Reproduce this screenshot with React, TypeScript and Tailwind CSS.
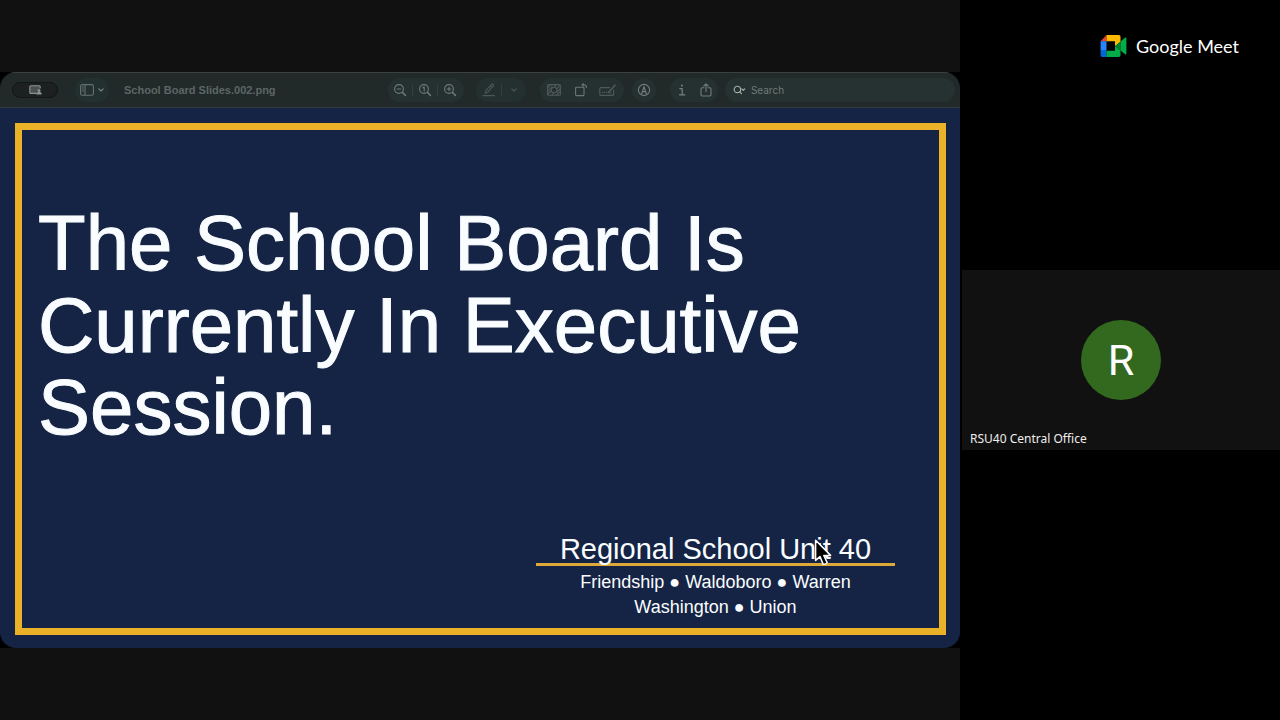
import React from "react";

function ToolButton({
  label,
  className,
  children
}: {
  label: string;
  className: string;
  children: React.ReactNode;
}) {
  return (
    <button type="button" aria-label={label} className={`flex h-full items-center justify-center ${className}`}>
      {children}
    </button>
  );
}

function Icon({
  w = 14,
  h = 14,
  className = "text-[#66716f]",
  children
}: {
  w?: number;
  h?: number;
  className?: string;
  children: React.ReactNode;
}) {
  return (
    <svg
      width={w}
      height={h}
      viewBox={`0 0 ${w} ${h}`}
      fill="none"
      stroke="currentColor"
      strokeWidth="1.1"
      strokeLinecap="round"
      strokeLinejoin="round"
      aria-hidden="true"
      className={className}
    >
      {children}
    </svg>
  );
}

function Divider() {
  return <span className="h-3 w-px bg-[#33403e]" />;
}

function Magnifier({ children }: { children: React.ReactNode }) {
  return (
    <Icon className="text-[#6f7a78]">
      <circle cx="6" cy="6" r="4.4" />
      <path d="M9.3 9.3 12.4 12.4" strokeWidth="1.5" />
      {children}
    </Icon>
  );
}

function Toolbar() {
  return (
    <div className="flex h-9 items-center border-t border-b border-t-[#3b4141] border-b-[#303b42] bg-[#212929] pr-[5px] pl-3">
      <button
        type="button"
        aria-label="Presenter options"
        className="flex h-4 w-[46px] items-center justify-center rounded-full border border-[#121616] bg-[#1c2020]"
      >
        <Icon w={13} h={10} className="text-[#8d9493]">
          <path d="M7 8.4H1.8a1 1 0 0 1-1-1V1.8a1 1 0 0 1 1-1h8.4a1 1 0 0 1 1 1V3" fill="#4b5150" />
          <circle cx="10" cy="5.4" r="1.5" fill="currentColor" stroke="none" />
          <path d="M7.2 9.4c0-1.7 1.2-2.3 2.8-2.3s2.8.6 2.8 2.3z" fill="currentColor" stroke="none" />
        </Icon>
      </button>

      <div className="ml-[17px] flex h-6 w-[34px] rounded-full bg-[#233030]">
        <ToolButton label="Sidebar" className="w-full gap-1">
          <Icon w={14} h={12}>
            <rect x="0.6" y="0.6" width="12.8" height="10.6" rx="1.8" />
            <path d="M5 .8v10.2M2.2 3h1.2M2.2 5h1.2M2.2 7h1.2" />
          </Icon>
          <Icon w={6} h={4} className="text-[#7a8482]">
            <path d="M.8.8 3 3 5.2.8" />
          </Icon>
        </ToolButton>
      </div>

      <h2 className="ml-[15px] min-w-0 flex-1 truncate font-['Liberation_Sans',Arial,sans-serif] text-[11px] font-bold text-[#5c6665]">
        School Board Slides.002.png
      </h2>

      <div className="flex h-6 items-center rounded-full bg-[#253130] pr-[2px]">
        <ToolButton label="Zoom out" className="w-6">
          <Magnifier>
            <path d="M4.2 6h3.6" />
          </Magnifier>
        </ToolButton>
        <Divider />
        <ToolButton label="Actual size" className="w-6">
          <Magnifier>
            <path d="M5 4.8 6.2 4v4" />
          </Magnifier>
        </ToolButton>
        <Divider />
        <ToolButton label="Zoom in" className="w-6">
          <Magnifier>
            <path d="M4.2 6h3.6M6 4.2v3.6" />
          </Magnifier>
        </ToolButton>
      </div>

      <div className="ml-3 flex h-6 items-center rounded-full bg-[#243030]">
        <ToolButton label="Highlight" className="w-[25px]">
          <Icon className="text-[#4c5755]">
            <path d="M3.2 10.2 4 7.4 9.6 1.4a1.1 1.1 0 0 1 1.7 1.5L5.8 9.2zM8.4 2.8l1.6 1.5" />
            <path d="M1 12.6h11.6" />
          </Icon>
        </ToolButton>
        <Divider />
        <ToolButton label="Highlight colors" className="w-6">
          <Icon w={6} h={4} className="text-[#4c5755]">
            <path d="M.8.8 3 3 5.2.8" />
          </Icon>
        </ToolButton>
      </div>

      <div className="ml-[14px] flex h-6 items-center rounded-full bg-[#253130] pr-[3px]">
        <ToolButton label="Remove background" className="w-[27px]">
          <Icon w={14} h={12} className="text-[#4f5a58]">
            <rect x="0.6" y="0.6" width="12.8" height="10.6" rx="1" />
            <circle cx="7" cy="6" r="2.8" />
            <path d="M1 3.4 3.6.8M1 6.8 5 2.8M1 10l3-3M10 4.6l3-3M10 8l3-3M9.6 11 13 7.8M5 11l1.4-1.4M7.6 2.4 9.2.8" />
          </Icon>
        </ToolButton>
        <ToolButton label="Rotate" className="w-[27px]">
          <Icon className="text-[#6b7674]">
            <rect x="1.6" y="4.2" width="8.4" height="8.4" rx="0.8" />
            <path d="M8 1.8h1.8a2.6 2.6 0 0 1 2.6 2.6M9.2.6 8 1.8 9.2 3" />
          </Icon>
        </ToolButton>
        <ToolButton label="Fill form" className="w-[27px]">
          <Icon w={17} h={13} className="text-[#4f5a58]">
            <path d="M10.5 3.6H2a1.2 1.2 0 0 0-1.2 1.2v5.4A1.2 1.2 0 0 0 2 11.4h11.4a1.2 1.2 0 0 0 1.2-1.2V6" />
            <path d="M9.6 8.2 16 1.2" strokeWidth="1.6" />
            <path d="M3.2 8.4h.4M5.2 8.4h.4M7.2 8.4h.4M9.2 8.8h2.6" />
          </Icon>
        </ToolButton>
      </div>

      <div className="ml-2 flex h-6 rounded-full bg-[#253130]">
        <ToolButton label="Markup" className="w-6">
          <Icon className="text-[#737e7c]">
            <circle cx="7" cy="7" r="5.6" />
            <path d="M4.6 11 7 3.6 9.4 11M5.6 8.6h2.8" />
          </Icon>
        </ToolButton>
      </div>

      <div className="ml-[14px] flex h-6 rounded-full bg-[#253130]">
        <ToolButton label="Info" className="w-6">
          <Icon w={8} h={12} className="text-[#76807f]">
            <circle cx="3.9" cy="1.4" r="1" fill="currentColor" stroke="none" />
            <path d="M1.8 4.6h2.4v6M1.4 10.8h5.4" strokeWidth="1.2" />
          </Icon>
        </ToolButton>
        <ToolButton label="Share" className="w-6">
          <Icon w={12} h={14} className="text-[#737e7c]">
            <path d="M4 4.8H2.2A1.2 1.2 0 0 0 1 6v5.8A1.2 1.2 0 0 0 2.2 13h7.6a1.2 1.2 0 0 0 1.2-1.2V6a1.2 1.2 0 0 0-1.2-1.2H8" />
            <path d="M6 8.6V1M3.8 3 6 .8 8.2 3" />
          </Icon>
        </ToolButton>
      </div>

      <label className="ml-[7px] flex h-6 w-[230px] items-center gap-[5px] rounded-full bg-[#263231] pl-2">
        <Icon w={14} h={10} className="text-[#a3abaa]">
          <circle cx="4.8" cy="4.4" r="3.5" strokeWidth="1.3" />
          <path d="M7.4 7 9.2 9M9.6 3.8l1.6 1.6 1.6-1.6" strokeWidth="1.3" />
        </Icon>
        <input
          type="text"
          aria-label="Search"
          placeholder="Search"
          className="w-full bg-transparent font-['Inter',sans-serif] text-[10px] outline-none placeholder:text-[#6f7977]"
        />
      </label>
    </div>
  );
}

function Pointer() {
  return (
    <svg
      width="20"
      height="30"
      viewBox="0 0 20 30"
      aria-hidden="true"
      className="absolute top-[2px] right-[62px]"
    >
      <path
        d="M2.6 3.2v20.2l4.4-3.8 3.2 7.6q2 .6 4-1.4l-3.4-7.4h6.8z"
        fill="#000"
        stroke="#fff"
        strokeWidth="1.5"
        strokeLinejoin="round"
      />
    </svg>
  );
}

function Slide() {
  return (
    <div className="flex aspect-video bg-[#152444] pt-[15px] pr-[14px] pb-[13px] pl-[15px] font-['Liberation_Sans',Arial,sans-serif] text-[#fafdff]">
      <div className="flex flex-1 flex-col justify-between border-[7px] border-[#e9b228] pt-[72px] pr-11 pb-2 pl-4">
        <h1 className="text-[78px] leading-[82px] [-webkit-text-stroke:1px_#fafdff]">
          The School Board Is
          <br />
          Currently In Executive
          <br />
          Session.
        </h1>
        <div className="relative w-[359px] self-end text-center">
          <p className="border-b-[3px] border-[#dfa93a] text-[29px] leading-7">Regional School Unit 40</p>
          <p className="mt-1 text-[18px] leading-[25px]">
            Friendship ● Waldoboro ● Warren
            <br />
            Washington ● Union
          </p>
          <Pointer />
        </div>
      </div>
    </div>
  );
}

function MeetLogo() {
  return (
    <div className="flex items-center gap-[9px]">
      <svg width="27" height="22" viewBox="0 0 27 22" aria-hidden="true">
        <path d="M6.5 0v6.2H.6z" fill="#ea4335" />
        <path d="M.6 6.2h5.9v9.6H.6z" fill="#2684fc" />
        <path d="M.6 15.8h5.9V22H2.4A1.8 1.8 0 0 1 .6 20.2z" fill="#0066da" />
        <path d="M6.5 0h12.2a1.8 1.8 0 0 1 1.8 1.8v5L15 11.4V6.2H6.5z" fill="#ffba00" />
        <path d="M6.5 15.8H15V11l5.5 4.6v4.6a1.8 1.8 0 0 1-1.8 1.8H6.5z" fill="#00ac47" />
        <path d="M15 11 20.5 6.4v9.2z" fill="#00832d" />
        <path d="M20.5 6.4 25 2.7q1.4-.8 1.4.7v15.2q0 1.5-1.4.7l-4.5-3.7z" fill="#00ac47" />
      </svg>
      <span className="font-['Lato',sans-serif] text-[18px] leading-6 text-white">Google Meet</span>
    </div>
  );
}

export default function App() {
  return (
    <div className="flex min-h-screen bg-black">
      <main className="flex w-3/4 flex-col justify-center bg-[#111111]">
        <div className="bg-black">
          <div className="overflow-hidden rounded-[16px]">
            <Toolbar />
            <Slide />
          </div>
        </div>
      </main>

      <aside className="flex w-1/4 flex-col pl-[2px]">
        <div className="flex-1">
          <div className="flex justify-end pt-[34px] pr-[41px]">
            <MeetLogo />
          </div>
        </div>
        <section className="flex h-[180px] flex-col items-center justify-between bg-[#111111]">
          <span className="mt-[50px] flex size-20 items-center justify-center rounded-full bg-[#33691e] font-['Roboto',sans-serif] text-[43px] text-white">
            R
          </span>
          <span className="self-start pb-[3px] pl-2 font-['Noto_Sans',sans-serif] text-[12px] leading-4 text-[#eeeeee]">
            RSU40 Central Office
          </span>
        </section>
        <div className="flex-1" />
      </aside>
    </div>
  );
}
